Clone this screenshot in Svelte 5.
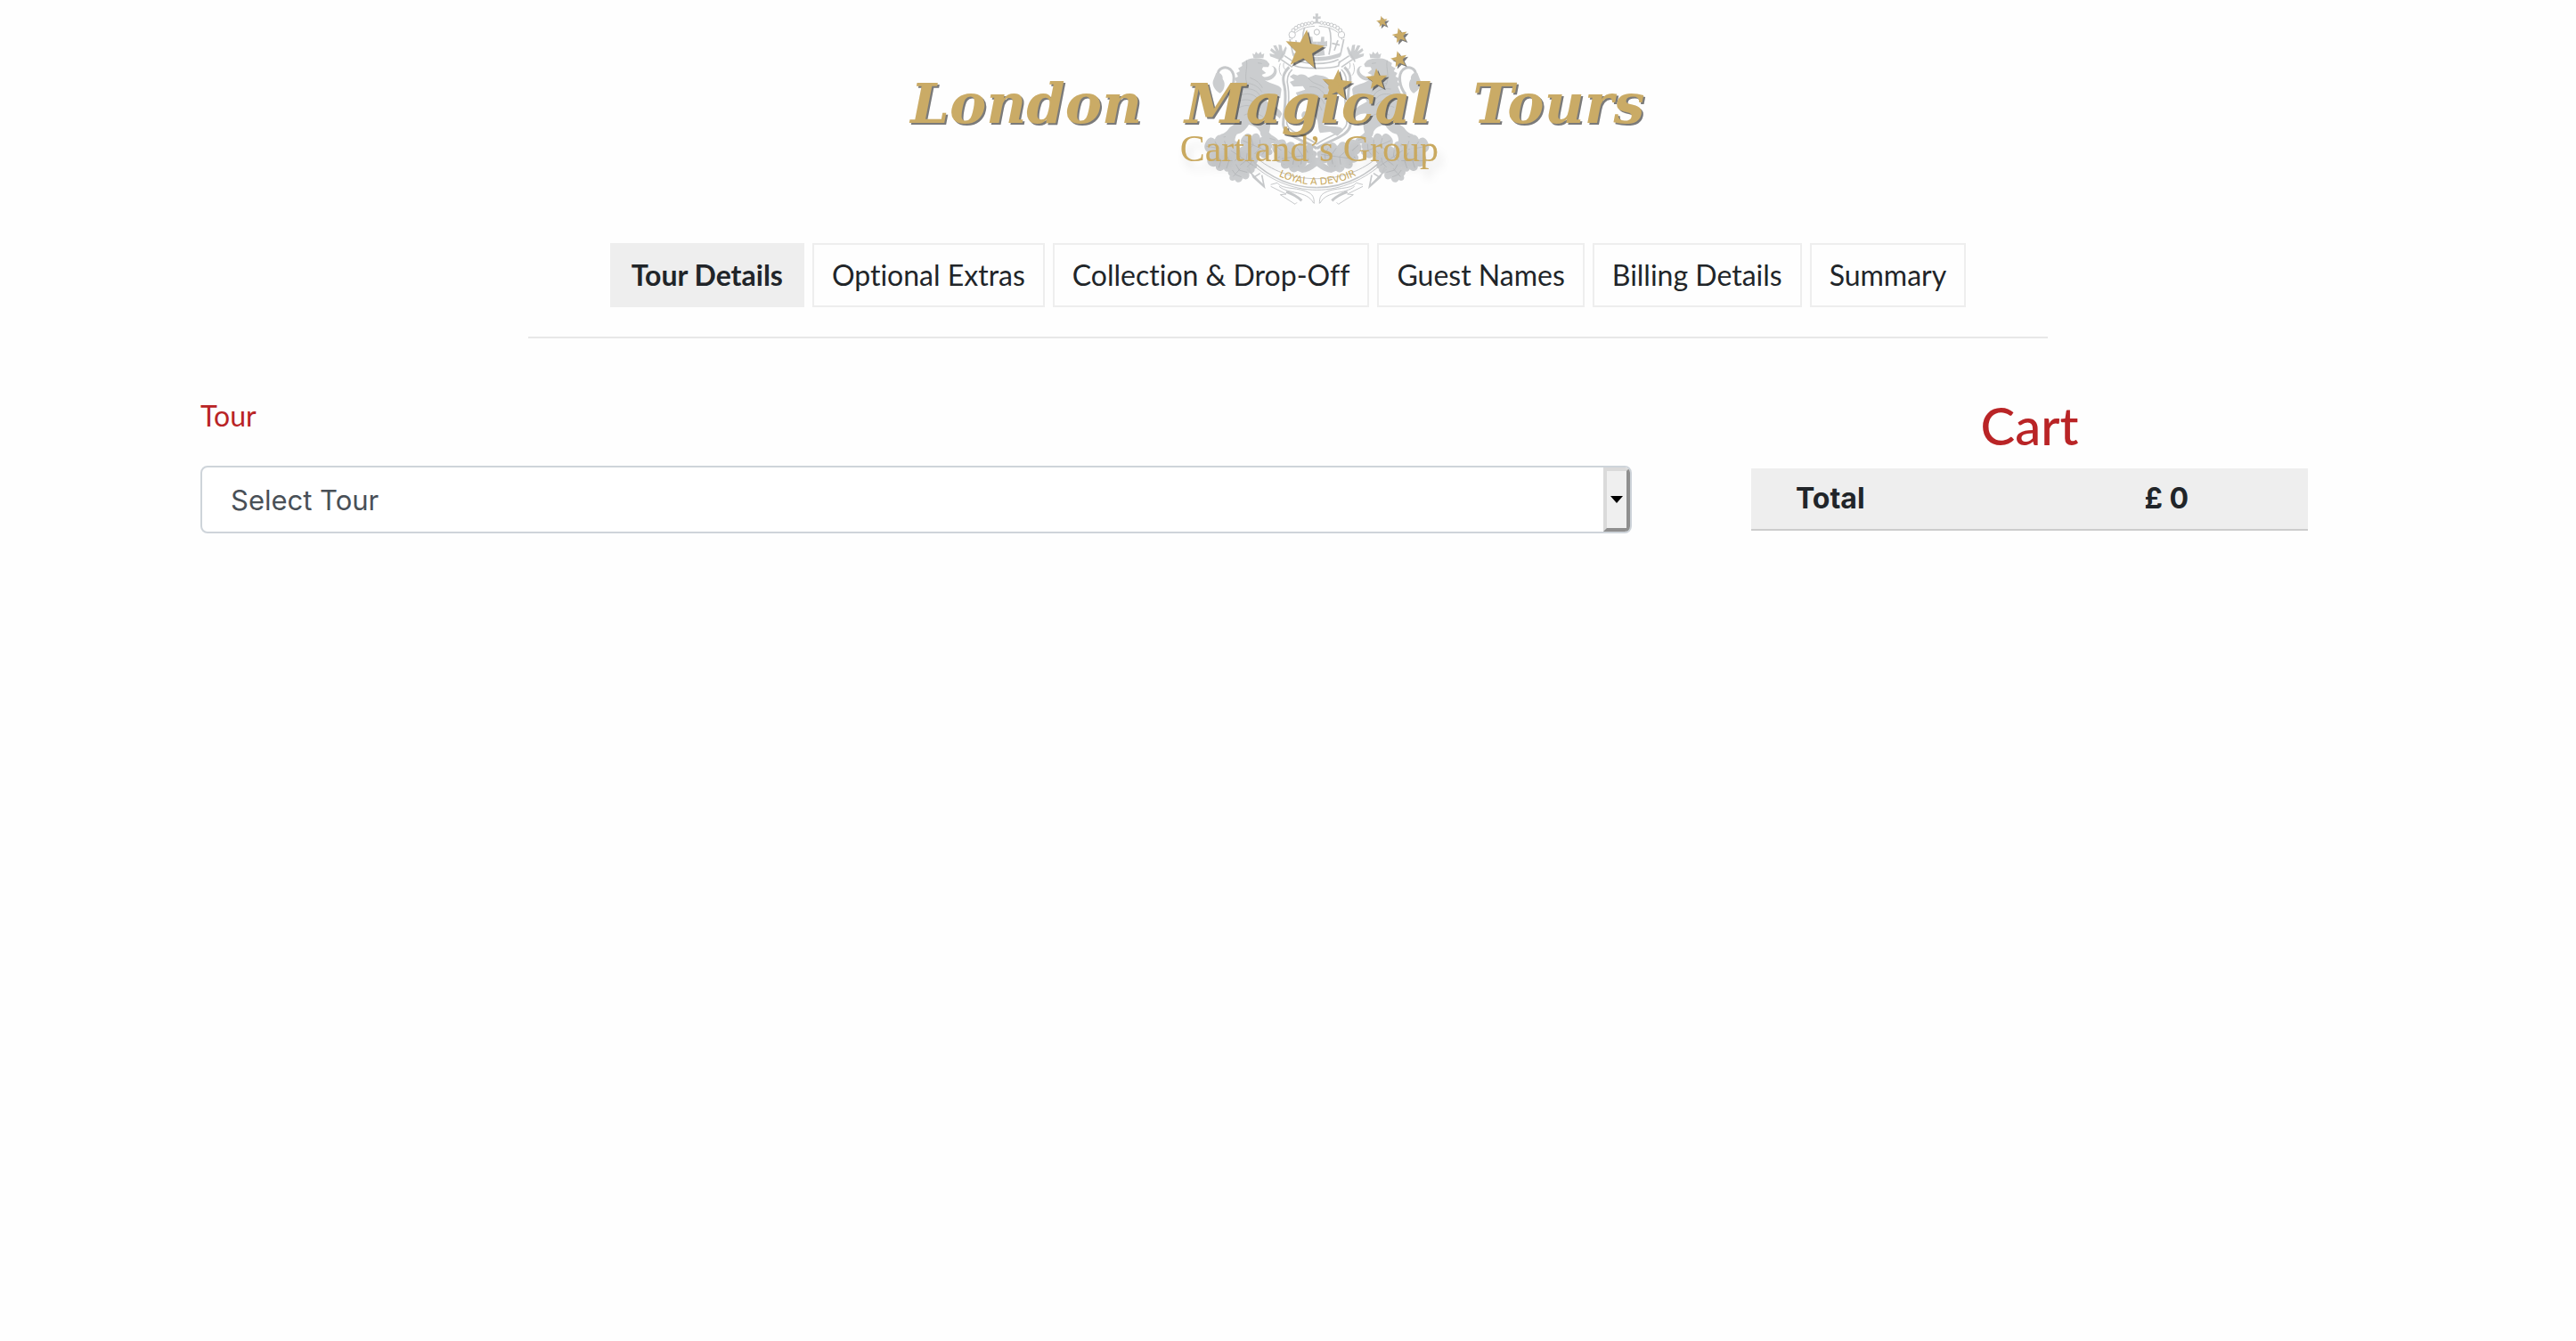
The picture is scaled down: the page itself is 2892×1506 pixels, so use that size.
<script>
  const steps = [
    'Tour Details',
    'Optional Extras',
    'Collection & Drop-Off',
    'Guest Names',
    'Billing Details',
    'Summary',
  ];
  let current = $state(0);
  let tour = $state('');
  const total = 0;

  function star(cx, cy, r, rot) {
    const pts = [];
    for (let i = 0; i < 10; i++) {
      const a = ((i * 36 + rot - 90) * Math.PI) / 180;
      const q = i % 2 ? r * 0.42 : r;
      pts.push(`${(cx + q * Math.cos(a)).toFixed(1)},${(cy + q * Math.sin(a)).toFixed(1)}`);
    }
    return pts.join(' ');
  }

  const stars = [
    star(433, 168, 69, 7),
    star(543, 287, 54, 5),
    star(677, 268, 38, -3),
    star(752, 200, 29, -12),
    star(755, 120, 27, -12),
    star(695, 73, 20, -10),
  ];

  // beads along the left arch of the crown
  const beads = [
    [392, 117, 11], [396, 102, 6], [405, 94, 6], [415, 88, 6], [426, 84, 6],
    [437, 81, 5], [448, 79, 5], [459, 77, 5], [475, 108, 9],
  ];
</script>

<header>
  <svg class="logo" viewBox="-900 30 2556 675" role="img" aria-label="London Magical Tours, Cartland's Group">
    <defs>
      <path id="motto" d="M310 574 Q475 672 645 572" />
      <g id="leaf">
        <path d="M0 0 C10 -22 22 -22 30 -12 C38 -30 54 -26 58 -12 C70 -24 84 -16 82 -2 C98 -6 106 8 98 18 C110 24 106 38 94 38 C92 52 76 54 68 44 C60 58 44 54 42 42 C28 50 16 40 20 28 C4 28 -6 14 0 0Z" />
        <path class="vein" d="M4 6 L92 28 M30 -6 L40 14 L28 34 M58 -6 L64 20 L50 42 M80 4 L82 24 L74 40" />
      </g>
      <g id="half">
        <!-- tail -->
        <path class="line thick" d="M176 318 C196 294 204 252 184 234 C166 220 140 230 142 254" />
        <path d="M136 246 C150 242 160 254 158 266 C172 284 160 310 148 314 C132 304 118 284 128 266 Z" />
        <!-- lion -->
        <path d="M238 203 C258 192 286 194 306 204 L316 216 L312 226 L294 226 L290 234 L304 246 L290 252 C296 266 312 258 322 252 C334 244 334 226 322 222 C338 222 346 240 336 254 C326 268 312 274 300 270 C318 284 350 284 356 300 L352 330 C330 330 312 326 306 342 C330 356 352 366 358 384 L350 400 C340 386 320 380 306 384 C318 404 322 424 314 446 C324 460 346 462 350 482 L312 484 C300 470 284 462 284 444 C276 428 262 424 246 420 C236 436 226 448 206 452 C198 464 198 476 204 486 L158 486 C146 476 144 462 152 452 C176 448 176 430 190 424 C212 410 196 396 190 380 C174 352 186 326 196 306 L202 292 L192 284 L204 276 L196 264 L210 258 L204 246 L216 240 L210 230 L224 222 L222 212Z" />
        <path class="vein" d="M238 203 C244 230 226 262 244 290 M250 262 C276 272 282 280 292 296 M240 280 C260 282 280 292 290 310 M226 300 C256 296 276 306 284 324 M220 320 C250 310 272 322 280 340 M214 340 C240 330 266 340 276 356 M214 362 C238 350 260 356 270 372 M230 388 C250 378 280 380 296 396 M150 466 L168 460 M152 476 L170 470 M316 466 L336 472 M276 212 L290 214" />
        <path d="M262 196 L258 180 L266 184 L270 174 L278 182 L286 174 L290 184 L298 180 L295 196Z" />
        <!-- torch -->
        <path d="M350 202 L318 190 L316 180 L334 184 L318 170 L322 162 L338 174 L328 154 L338 152 L348 172 L346 150 L356 152 L360 174 L370 156 L374 162 L368 182 L360 196Z" />
        <path class="line" d="M354 200 L392 226 M366 188 L402 212 M346 208 L362 180" />
        <!-- crown -->
        <path class="line" d="M384 128 C390 92 430 78 475 76" />
        <path class="line thin" d="M390 134 C394 106 430 90 468 88" />
        <path class="line" d="M384 132 L396 188 M434 92 C424 120 426 150 434 184" />
        <path d="M394 176 C420 188 450 192 475 192 L475 206 C446 206 418 200 396 192Z" />
        <path d="M448 186 L452 158 L440 156 L440 138 L450 140 L450 124 L460 124 L462 140 L475 140 L475 190Z" />
        <path class="line" d="M404 136 L416 170 M398 152 L424 146" />
        <path class="line" d="M402 200 C426 212 450 214 475 214 M398 206 L402 222 C424 230 450 230 475 230" />
        {#each beads as [x, y, r]}
          <circle class="bead" cx={x} cy={y} {r} />
        {/each}
        <!-- shield -->
        <path class="line thick" d="M382 226 C362 246 358 262 366 290 C376 340 362 380 362 420 C366 460 430 470 475 500" />
        <path class="line" d="M392 234 C376 250 372 268 378 292 C386 340 374 380 374 416 C380 448 436 456 475 486" />
        <path class="line thin" d="M352 214 C346 230 348 244 356 254 M364 212 C360 226 366 236 376 236" />
        <!-- oak leaves -->
        <use href="#leaf" transform="translate(98 486) rotate(-4) scale(1.15)" />
        <use href="#leaf" transform="translate(106 536) rotate(-14) scale(1.1)" />
        <use href="#leaf" transform="translate(264 524) rotate(118) scale(1.05)" />
        <use href="#leaf" transform="translate(184 500) rotate(20) scale(1)" />
        <use href="#leaf" transform="translate(222 466) rotate(10) scale(1.05)" />
        <use href="#leaf" transform="translate(334 480) rotate(28) scale(1.2)" />
        <use href="#leaf" transform="translate(350 530) rotate(-22) scale(1.15)" />
        <path d="M398 570 C430 570 470 540 500 510 L516 522 C490 546 460 580 426 582Z" />
        <!-- ribbon -->
        <path class="line thin" d="M268 528 C320 574 390 602 475 602" />
        <path class="line" d="M256 540 C316 598 392 632 475 632" />
        <path class="line thin" d="M252 548 C312 604 392 640 475 640" />
        <path class="line" d="M244 560 L262 598 L298 630 L290 590 M262 598 L284 584 M240 570 L296 626" />
        <path class="line thin" d="M320 622 L342 616 C356 640 420 630 450 650 C464 658 466 670 466 686 M320 628 L372 654 L352 656 L402 688 L408 682 M348 628 C380 656 440 640 464 684" />
        <path class="line thick" d="M372 646 C396 654 412 664 424 676" />
      </g>
    </defs>

    <g class="crest">
      <use href="#half" />
      <use href="#half" transform="translate(950 0) scale(-1 1)" />
      <path d="M470 78 L471 64 L462 63 L462 55 L471 56 L470 46 L480 46 L479 56 L488 55 L488 63 L479 64 L480 78Z" />
      <!-- lion on the shield -->
      <path d="M410 254 C422 246 440 252 446 262 L470 252 L496 256 C520 262 530 282 524 304 C540 330 532 356 520 372 L530 400 L514 414 L500 396 L496 420 C520 430 560 420 564 440 L544 458 L520 444 L486 448 C476 430 484 410 470 392 L440 404 C420 400 420 384 430 376 L452 374 C462 352 440 346 444 322 L412 326 L404 312 L436 302 L428 290 L396 292 L384 276 L400 270 L384 258 L396 250Z" />
      <path class="vein" d="M446 262 C460 284 480 280 500 296 M450 292 C476 290 494 304 504 324 M452 316 C476 314 492 330 500 350 M460 340 C476 344 486 356 492 372" />
    </g>

    <text class="motto"><textPath href="#motto" startOffset="50%">LOYAL A DEVOIR</textPath></text>
    <text class="group" x="14" y="543">Cartland’s Group</text>
    <g class="gold">
      {#each stars as points}
        <polygon {points} />
      {/each}
      <text x="-893" y="414">London</text>
      <text x="30" y="414">Magical</text>
      <text x="1000" y="414">Tours</text>
    </g>
  </svg>

  <nav aria-label="Booking steps">
    {#each steps as step, i}
      <button
        type="button"
        class:active={i === current}
        aria-current={i === current ? 'step' : undefined}
        onclick={() => (current = i)}>{step}</button>
    {/each}
  </nav>
</header>

<main>
  <section class="form">
    <label for="tour">Tour</label>
    <div class="picker">
      <select id="tour" bind:value={tour}>
        <option value="">Select Tour</option>
      </select>
      <span class="arrow" aria-hidden="true">
        <svg viewBox="0 0 14 8"><path d="M0 0H14L7 8Z" /></svg>
      </span>
    </div>
  </section>

  <aside>
    <h2>Cart</h2>
    <table>
      <tbody>
        <tr>
          <th scope="row">Total</th>
          <td>£ {total}</td>
        </tr>
      </tbody>
    </table>
  </aside>
</main>

<style>
  :global(body) {
    margin: 0;
    background: #fefefe;
    color: #212529;
    font-family: Lato, sans-serif;
    font-size: 32px;
    font-variant-ligatures: none;
    line-height: 48px;
  }

  header {
    display: flex;
    flex-direction: column;
    align-items: center;
    width: 59%;
    margin: 0 auto;
    padding: 10px 0 33px;
    border-bottom: 2px solid #e8e8e8;
  }

  .logo {
    display: block;
    width: 852px;
    max-width: 100%;
    height: auto;
    margin-bottom: 38px;
  }

  .crest {
    fill: #cbcdcf;
  }

  .line {
    fill: none;
    stroke: #c6c8ca;
    stroke-width: 5;
  }

  .thin {
    stroke-width: 3;
  }

  .thick {
    stroke-width: 9;
  }

  .vein {
    fill: none;
    stroke: #b4b6b8;
    stroke-width: 2;
  }

  .bead {
    fill: #fefefe;
    stroke: #c6c8ca;
    stroke-width: 3;
  }

  .motto {
    fill: #c9a960;
    font: 33px "DejaVu Sans", sans-serif;
    text-anchor: middle;
  }

  .group {
    fill: #c9a960;
    font: 126px "Liberation Serif", serif;
    filter: drop-shadow(14px 28px 14px rgb(0 0 0 / 0.1));
  }

  .gold {
    fill: #caab66;
    font: italic bold 186px "DejaVu Serif", serif;
    filter: drop-shadow(6px 6px 2px rgb(50 50 50 / 0.65));
  }

  nav {
    display: flex;
    flex-wrap: wrap;
    justify-content: center;
    gap: 9px;
  }

  button {
    padding: 10px 20px;
    border: 2px solid #eee;
    background: transparent;
    color: inherit;
    font: inherit;
    font-variant-ligatures: none;
    cursor: pointer;
  }

  button.active {
    padding: 10px 22px;
    background: #eee;
    font-weight: 700;
  }

  main {
    display: grid;
    grid-template-columns: 1607fr 625fr;
    column-gap: 134px;
    padding: 63px 301px 63px 225px;
  }

  label {
    display: block;
    margin-bottom: 32px;
    color: #b92426;
  }

  .picker {
    display: grid;
    overflow: hidden;
    border: 2px solid #ced4da;
    border-radius: 8px;
    background: #fff;
  }

  select,
  .arrow {
    grid-area: 1 / 1;
  }

  select {
    appearance: none;
    width: 100%;
    height: 72px;
    padding: 0 60px 0 32px;
    border: 0;
    background: transparent;
    color: #495057;
    font: 31px Inter, sans-serif;
  }

  .arrow {
    display: flex;
    align-items: center;
    justify-content: center;
    justify-self: end;
    box-sizing: border-box;
    width: 30px;
    border: 4px solid;
    border-color: #dadada #8f8f8f #8f8f8f #dadada;
    background: #efefef;
    pointer-events: none;
  }

  .arrow svg {
    width: 14px;
    height: 8px;
  }

  h2 {
    margin: 0 0 13px;
    color: #b92426;
    font-size: 58px;
    font-weight: 500;
    line-height: 70px;
    text-align: center;
  }

  table {
    width: 100%;
    border-collapse: collapse;
    background: #eee;
    font-family: Inter, sans-serif;
    font-weight: 700;
  }

  tr {
    border-bottom: 2px solid #ccc;
  }

  th,
  td {
    padding: 10px 0;
  }

  th {
    padding-left: 50px;
    text-align: left;
  }

  td {
    width: 50%;
    padding-right: 134px;
    text-align: right;
  }
</style>
